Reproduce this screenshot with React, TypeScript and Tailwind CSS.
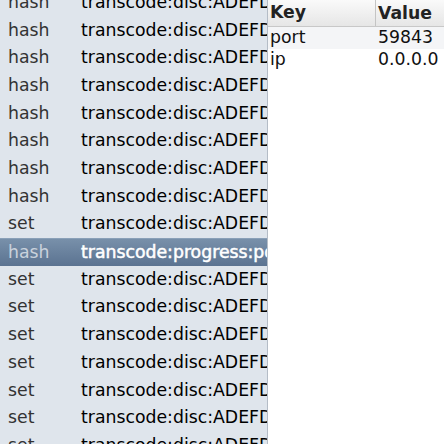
const rows: { type: string; key: string }[] = [
  ...Array.from({ length: 8 }, () => ({ type: "hash", key: "transcode:disc:ADEFD" })),
  { type: "set", key: "transcode:disc:ADEFD" },
  { type: "hash", key: "transcode:progress:port" },
  ...Array.from({ length: 7 }, () => ({ type: "set", key: "transcode:disc:ADEFD" })),
];

const SELECTED = 9;

const fields = [
  { key: "port", value: "59843" },
  { key: "ip", value: "0.0.0.0" },
];

export default function App() {
  return (
    <div className="flex h-[444px] w-[444px] overflow-hidden bg-white text-[17.3px] text-[#111] [font-family:'DejaVu_Sans',sans-serif]">
      {/* source list */}
      <div className="h-full w-[268px] shrink-0 overflow-hidden border-r border-[#b4bcc6] bg-[#dfe5ec]">
        <div className="-mt-[11px]">
          {rows.map((r, i) => {
            const sel = i === SELECTED;
            return (
              <div
                key={i}
                className={
                  "flex h-[27.7px] items-center whitespace-nowrap " +
                  (sel
                    ? "border-t border-[#8aa0b8] bg-gradient-to-b from-[#7890aa] to-[#5b7391] text-white"
                    : "")
                }
              >
                <span className={"w-[81px] shrink-0 pl-[8px] " + (sel ? "text-[#c9d2dc]" : "text-[#333]")}>
                  {r.type}
                </span>
                <span className={sel ? "text-white [-webkit-text-stroke:0.5px_white]" : "text-black"}>{r.key}</span>
              </div>
            );
          })}
        </div>
      </div>

      {/* key/value table */}
      <div className="flex-1 whitespace-nowrap">
        <div className="flex h-[27px] items-center border-b border-[#c8c8c8] bg-gradient-to-b from-[#fafafa] to-[#e6e6e6] font-bold text-[#222]">
          <div className="w-[107px] pl-[2px]">Key</div>
          <div className="h-full border-l border-[#c4c4c4] pl-[2px] leading-[27px]">Value</div>
        </div>
        {fields.map((f, i) => (
          <div key={f.key} className={"flex h-[22px] items-center " + (i % 2 === 0 ? "bg-[#f4f5f7]" : "bg-white")}>
            <div className="w-[108px] pl-[2px]">{f.key}</div>
            <div className="pl-[2px]">{f.value}</div>
          </div>
        ))}
      </div>
    </div>
  );
}
